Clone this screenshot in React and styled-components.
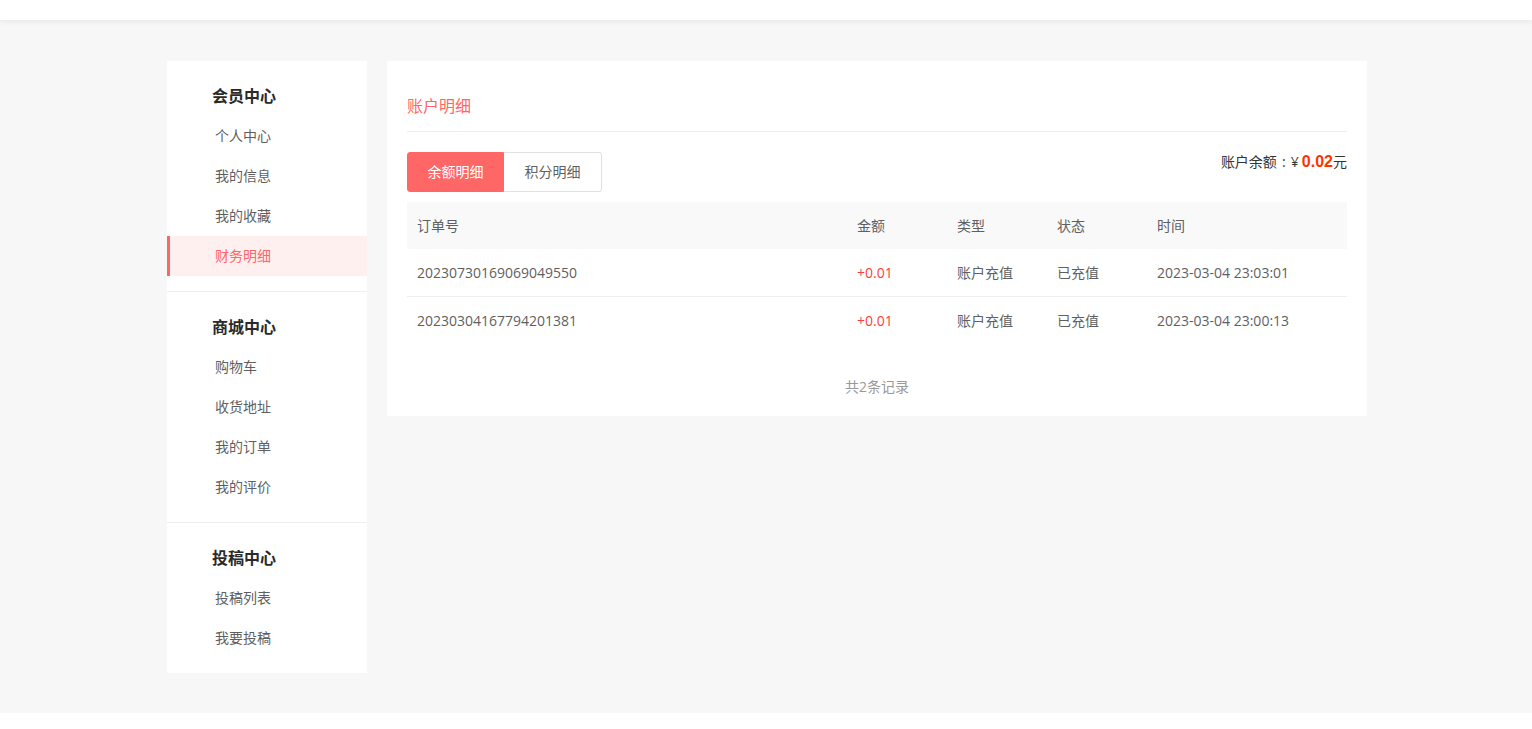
import React from 'react';
import styled, { createGlobalStyle } from 'styled-components';

const Global = createGlobalStyle`
  html, body { margin: 0; padding: 0; background: #fff; }
  body { font-family: "Open Sans", "Noto Sans CJK SC", sans-serif; font-size: 14px; color: #5f5f5f; }
  * { box-sizing: border-box; }
`;
const TopBar = styled.header`height: 20px; background: #fff; box-shadow: 0 1px 6px rgba(0,0,0,.08); position: relative;`;
const Page = styled.div`background: #f7f7f7; height: 693px; padding-top: 41px;`;
const Wrap = styled.div`width: 1200px; margin: 0 auto 0 167px; display: flex; gap: 20px; align-items: flex-start;`;
const Side = styled.aside`width: 200px; background: #fff; height: 612px;`;
const Group = styled.section`padding-top: 20px; padding-bottom: 15px; border-bottom: ${p => p.$last ? 'none' : '1px solid #eee'};`;
const GroupTitle = styled.h3`margin: 0 0 5px; padding-left: 45px; font-size: 16px; font-weight: 700; color: #2a2a2a; height: 30px; line-height: 30px;`;
const NavItem = styled.a`display: block; height: 40px; line-height: 40px; padding-left: ${p => p.$active ? '45px' : '48px'}; font-size: 14px; color: ${p => p.$active ? '#ff6666' : '#5f5f5f'}; background: ${p => p.$active ? '#fff0f0' : 'transparent'}; border-left: ${p => p.$active ? '3px solid #ff6666' : 'none'};`;
const Main = styled.main`width: 980px; background: #fff; padding: 0 20px; height: 355px;`;
const Title = styled.h2`margin: 0; height: 71px; padding-top: 31px; font-size: 16px; font-weight: 400; line-height: 28px; color: #ff6666; border-bottom: 1px solid #eee;`;
const Bar = styled.div`display: flex; justify-content: space-between; align-items: flex-start; margin-top: 20px;`;
const Tabs = styled.div`display: flex;`;
const Tab = styled.button`width: ${p => p.$active ? '97px' : '98px'}; height: 40px; font: inherit; font-size: 14px; border: 1px solid ${p => p.$active ? '#ff6666' : '#e2e2e6'}; background: ${p => p.$active ? '#ff6666' : '#fff'}; color: ${p => p.$active ? '#fff' : '#5f5f5f'}; border-radius: ${p => p.$active ? '3px 0 0 3px' : '0 3px 3px 0'}; border-left-width: ${p => p.$active ? '1px' : '0'}; padding: 0 0 2px;`;
const Balance = styled.div`font-size: 14px; color: #333; line-height: 20px;`;
const Colon = styled.span`margin: 0 1.5px;`;
const Amount = styled.b`color: #ff3300; font-size: 16px; font-family: "Liberation Sans", sans-serif; margin-left: 3px;`;
const Table = styled.table`width: 100%; border-collapse: separate; border-spacing: 0; margin-top: 10px; table-layout: fixed;`;
const Th = styled.th`height: 47px; background: #f9f9f9; font-weight: 400; text-align: left; padding: 0 10px 2px; font-size: 14px; color: #5f5f5f;`;
const Td = styled.td`height: 48px; padding: ${p => p.$line ? '0 10px 1px' : '0 10px 2px'}; font-size: 14px; color: ${p => p.$red ? '#ff3b3b' : '#5f5f5f'}; border-bottom: ${p => p.$line ? '1px solid #eee' : 'none'};`;
const Total = styled.div`text-align: center; margin-top: 32px; font-size: 14px; color: #999; line-height: 20px;`;
const Footer = styled.footer`height: 16px; background: #fff;`;

const groups = [
  ['会员中心', ['个人中心', '我的信息', '我的收藏', '财务明细']],
  ['商城中心', ['购物车', '收货地址', '我的订单', '我的评价']],
  ['投稿中心', ['投稿列表', '我要投稿']],
];
const rows = [
  ['20230730169069049550', '+0.01', '账户充值', '已充值', '2023-03-04 23:03:01'],
  ['20230304167794201381', '+0.01', '账户充值', '已充值', '2023-03-04 23:00:13'],
];

export default function App() {
  return (
    <>
      <Global />
      <TopBar />
      <Page>
        <Wrap>
          <Side>
            {groups.map(([t, items], i) => (
              <Group key={t} $last={i === 2}>
                <GroupTitle>{t}</GroupTitle>
                {items.map(n => <NavItem key={n} $active={n === '财务明细'}>{n}</NavItem>)}
              </Group>
            ))}
          </Side>
          <Main>
            <Title>账户明细</Title>
            <Bar>
              <Tabs>
                <Tab $active>余额明细</Tab>
                <Tab>积分明细</Tab>
              </Tabs>
              <Balance>账户余额 <Colon>:</Colon> ¥<Amount>0.02</Amount>元</Balance>
            </Bar>
            <Table>
              <colgroup>
                <col style={{ width: 440 }} /><col style={{ width: 100 }} /><col style={{ width: 100 }} /><col style={{ width: 100 }} /><col />
              </colgroup>
              <thead><tr>{['订单号', '金额', '类型', '状态', '时间'].map(h => <Th key={h}>{h}</Th>)}</tr></thead>
              <tbody>
                {rows.map((r, i) => (
                  <tr key={r[0]}>
                    {r.map((c, j) => <Td key={j} $red={j === 1} $line={i === 0}>{c}</Td>)}
                  </tr>
                ))}
              </tbody>
            </Table>
            <Total>共2条记录</Total>
          </Main>
        </Wrap>
      </Page>
      <Footer />
    </>
  );
}
